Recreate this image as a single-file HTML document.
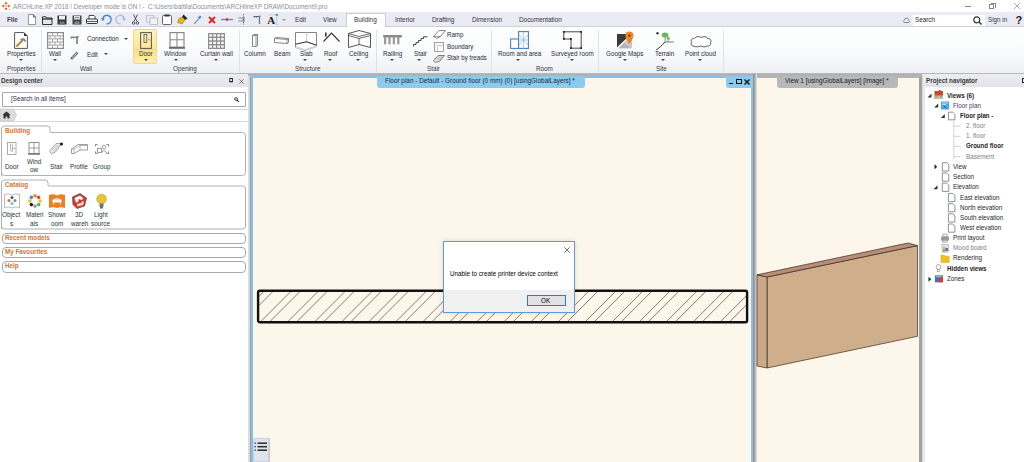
<!DOCTYPE html>
<html><head><meta charset="utf-8">
<style>
*{box-sizing:border-box;margin:0;padding:0}
html,body{width:1024px;height:462px;overflow:hidden;background:#fff;font-family:"Liberation Sans",sans-serif;color:#1e1e1e}
.a{position:absolute;white-space:nowrap}
svg{position:absolute;overflow:visible}
.x{position:absolute;white-space:nowrap;font-size:7.2px;line-height:8px;transform:scaleX(.875);transform-origin:0 0;color:#2a2a36}
#title{left:0;top:0;width:1024px;height:12px;background:#fff}
#qat{left:0;top:12px;width:1024px;height:15px;background:#ebecf3;border-bottom:1px solid #cfd1da}
#ribbon{left:0;top:27px;width:1024px;height:47px;background:linear-gradient(#fefefe,#f9fafb 55%,#eef0f3);border-bottom:1px solid #b4b8c2}
.sep{position:absolute;top:3px;width:1px;height:42px;background:#dfe2e8}
.gl{top:38px;color:#383848}
.dd{position:absolute;width:0;height:0;border-left:2px solid transparent;border-right:2px solid transparent;border-top:2px solid #444}
</style></head><body>

<!-- TITLE BAR -->
<div id="title" class="a">
  <svg style="left:1.5px;top:2px" width="8" height="8" viewBox="0 0 9 9">
    <g fill="#e8642c"><rect x="3.3" y="0.3" width="2.4" height="2.4" transform="rotate(45 4.5 1.5)"/><rect x="0.3" y="3.3" width="2.4" height="2.4" transform="rotate(45 1.5 4.5)"/><rect x="6.3" y="3.3" width="2.4" height="2.4" transform="rotate(45 7.5 4.5)"/><rect x="3.3" y="6.3" width="2.4" height="2.4" transform="rotate(45 4.5 7.5)"/><rect x="3.6" y="3.6" width="1.8" height="1.8" fill="#f4a070"/></g>
    <circle cx="8.3" cy="8.5" r="0.6" fill="#777"/>
  </svg>
  <div class="x" style="left:12.7px;top:2.7px;color:#8c8c94;transform:scaleX(.874)">ARCHLine.XP 2018 ! Developer mode is ON ! -&nbsp; C:\Users\battila\Documents\ARCHlineXP DRAW\Document9.pro</div>
  <div class="a" style="left:965px;top:5.5px;width:6px;height:0.8px;background:#888"></div>
  <div class="a" style="left:989px;top:4px;width:5px;height:5px;border:0.8px solid #888"></div>
  <div class="a" style="left:990.5px;top:2.5px;width:5px;height:5px;border-top:0.8px solid #888;border-right:0.8px solid #888"></div>
  <svg style="left:1014px;top:3px" width="6" height="6" viewBox="0 0 6 6"><path d="M0 0L6 6M6 0L0 6" stroke="#888" stroke-width="0.7"/></svg>
</div>

<!-- QUICK ACCESS / TABS -->
<div id="qat" class="a">
  <div class="x" style="left:7px;top:4.2px;font-weight:bold;color:#3a3a50">File</div>
  <!-- new -->
  <svg style="left:28px;top:2px" width="8" height="11" viewBox="0 0 9 11" preserveAspectRatio="none"><path d="M0.5 0.5H6L8.5 3V10.5H0.5Z" fill="#fff" stroke="#777" stroke-width="0.8"/><path d="M6 0.5V3H8.5" fill="none" stroke="#333" stroke-width="0.8"/></svg>
  <!-- open -->
  <svg style="left:42px;top:4px" width="11" height="9" viewBox="0 0 11 9"><path d="M0.5 8.5V0.8H4L5 2H10V8.5Z" fill="#e8e8ec" stroke="#333" stroke-width="1"/><path d="M0.5 3H10.5" stroke="#222" stroke-width="1.2"/></svg>
  <!-- save -->
  <svg style="left:57px;top:3px" width="10" height="10" viewBox="0 0 10 10"><rect x="0.5" y="0.5" width="9" height="9" fill="#333"/><rect x="2" y="1" width="6" height="3.5" fill="#eee"/><rect x="2.5" y="6.5" width="5" height="3" fill="#777"/></svg>
  <!-- save as -->
  <svg style="left:72px;top:3px" width="10" height="10" viewBox="0 0 10 10"><rect x="0.5" y="0.5" width="9" height="9" fill="#444"/><rect x="2" y="1" width="6" height="3.5" fill="#ddd"/><path d="M3 2.5H7" stroke="#555" stroke-width="0.6"/><rect x="2.5" y="6.5" width="5" height="3" fill="#888"/></svg>
  <!-- print -->
  <svg style="left:86px;top:3px" width="12" height="10" viewBox="0 0 12 10"><path d="M3 4V0.5H8L9 1.5V4" fill="#fff" stroke="#333" stroke-width="0.9"/><rect x="0.5" y="4" width="11" height="4.5" rx="0.8" fill="#f4f4f4" stroke="#333" stroke-width="1"/><path d="M0.5 6.5H11.5" stroke="#333" stroke-width="0.8"/></svg>
  <!-- undo -->
  <svg style="left:101px;top:2px" width="11" height="11" viewBox="0 0 11 11"><path d="M1.8 4.5A4.2 4.2 0 1 1 5.5 9.8" fill="none" stroke="#2f86d6" stroke-width="1.3"/><path d="M0 4.2L3.8 4.2L1.9 7.2Z" fill="#2f86d6"/></svg>
  <!-- redo -->
  <svg style="left:115px;top:2px" width="11" height="11" viewBox="0 0 11 11"><path d="M9.2 4.5A4.2 4.2 0 1 0 5.5 9.8" fill="none" stroke="#a4b8dc" stroke-width="1.2"/><path d="M11 4.2L7.2 4.2L9.1 7.2Z" fill="#a4b8dc"/></svg>
  <!-- cut -->
  <svg style="left:132px;top:2px" width="7" height="11" viewBox="0 0 7 11"><path d="M1.5 0.5L5 7.5M5.5 0.5L2 7.5" stroke="#333" stroke-width="0.8"/><circle cx="1.6" cy="9" r="1.3" fill="none" stroke="#333" stroke-width="0.8"/><circle cx="5.4" cy="9" r="1.3" fill="none" stroke="#333" stroke-width="0.8"/></svg>
  <!-- copy -->
  <svg style="left:146px;top:3px" width="12" height="10" viewBox="0 0 12 10"><rect x="0.5" y="0.5" width="7" height="6.5" fill="none" stroke="#c4c4c8" stroke-width="0.9"/><rect x="4" y="3" width="7.5" height="6.5" fill="#f4f4f6" stroke="#bbb" stroke-width="0.9"/></svg>
  <!-- paste -->
  <svg style="left:162px;top:2px" width="10" height="11" viewBox="0 0 10 11"><rect x="0.5" y="1.5" width="9" height="9" rx="1" fill="#fff" stroke="#555" stroke-width="0.9"/><rect x="2.5" y="0.5" width="5" height="2" fill="#333"/></svg>
  <!-- brush -->
  <svg style="left:177px;top:2px" width="11" height="11" viewBox="0 0 11 11"><path d="M6.5 0.5L10.5 4.5L8 6L5 3Z" fill="#222"/><path d="M5 3L8 6L5 10L0.5 8.5L1.5 5Z" fill="#e5b812" stroke="#8a6c00" stroke-width="0.5"/></svg>
  <!-- pipette -->
  <svg style="left:193px;top:3px" width="9" height="10" viewBox="0 0 9 10"><path d="M1 9L6 3.5" stroke="#999" stroke-width="1.2"/><path d="M5 2.5L7 0.5L8.5 2L6.5 4Z" fill="#2f8ad8"/></svg>
  <!-- red x -->
  <svg style="left:208px;top:4px" width="8" height="8" viewBox="0 0 8 8"><path d="M1 1L7 7M7 1L1 7" stroke="#e02020" stroke-width="1.8"/></svg>
  <!-- line -->
  <svg style="left:221px;top:5px" width="12" height="5" viewBox="0 0 12 5"><path d="M0 2.5H12" stroke="#5a88c0" stroke-width="1.3"/><rect x="4.8" y="1.3" width="2.4" height="2.4" fill="#e03030"/></svg>
  <svg style="left:238px;top:2px" width="8" height="11" viewBox="0 0 8 11"><path d="M5.5 0V11" stroke="#666" stroke-width="0.9" stroke-dasharray="1 0.6"/><path d="M0.5 4H7M0.5 7H7" stroke="#555" stroke-width="0.7"/><circle cx="5.5" cy="5.5" r="1" fill="#2f8ad8"/></svg>
  <svg style="left:253px;top:3px" width="8" height="9" viewBox="0 0 8 9"><path d="M0.5 1.5H6.5" stroke="#666" stroke-width="1"/><path d="M6.5 1V9" stroke="#777" stroke-width="1.3"/><path d="M1.5 1.5V3M3.5 1.5V3" stroke="#555" stroke-width="0.6"/><rect x="6" y="0.5" width="1.5" height="1.5" fill="#2f8ad8"/></svg>
  <div class="a" style="left:267.3px;top:2.2px;font-family:'Liberation Serif',serif;font-weight:bold;font-size:11px;line-height:13px;color:#1a1a1a">A</div>
  <svg style="left:268px;top:2px" width="10" height="11" viewBox="0 0 10 11"><path d="M0.5 0.8H8.5" stroke="#8ab8e8" stroke-width="0.7" stroke-dasharray="1 0.5"/><path d="M8.8 1V11" stroke="#4a9ae0" stroke-width="0.7" stroke-dasharray="1 0.8"/><rect x="7.8" y="0" width="2" height="1.8" fill="#2f8ad8"/></svg>
  <div class="dd" style="left:281.5px;top:7px;border-top-color:#999"></div>
  <!-- tabs -->
  <div class="x" style="left:295px;top:4.2px;color:#30303e;transform:scaleX(.887)">Edit</div>
  <div class="x" style="left:323px;top:4.2px;color:#30303e;transform:scaleX(.887)">View</div>
  <div class="a" style="left:346px;top:0.5px;width:40px;height:15px;background:#fff;border:1px solid #c9ccd6;border-bottom:none;border-radius:1px 1px 0 0"></div>
  <div class="x" style="left:354px;top:4.2px;color:#3a3040;transform:scaleX(.887)">Building</div>
  <div class="x" style="left:395px;top:4.2px;color:#30303e;transform:scaleX(.887)">Interior</div>
  <div class="x" style="left:432px;top:4.2px;color:#30303e;transform:scaleX(.887)">Drafting</div>
  <div class="x" style="left:472px;top:4.2px;color:#30303e;transform:scaleX(.887)">Dimension</div>
  <div class="x" style="left:519px;top:4.2px;color:#30303e;transform:scaleX(.887)">Documentation</div>
  <!-- right -->
  <svg style="left:903px;top:6px" width="7" height="5" viewBox="0 0 7 5"><path d="M1 4.5A1.5 1.5 0 0 1 1.5 2A2 2 0 0 1 5.5 2A1.5 1.5 0 0 1 6 4.5Z" fill="none" stroke="#666" stroke-width="0.7"/></svg>
  <div class="a" style="left:912.5px;top:2.5px;width:72px;height:11px;background:#fff"></div>
  <div class="x" style="left:915px;top:4.2px;color:#1e1e1e">Search</div>
  <svg style="left:973px;top:4.2px" width="9" height="9" viewBox="0 0 9 9"><circle cx="3.8" cy="3.8" r="3" fill="none" stroke="#333" stroke-width="1.2"/><path d="M6 6L8.5 8.5" stroke="#333" stroke-width="1.4"/></svg>
  <div class="x" style="left:988px;top:4.2px;color:#2e3a4e">Sign in</div>
  <div class="a" style="left:1015.5px;top:2px;font-size:11px;font-weight:bold;line-height:12px;color:#222">?</div>
</div>

<!-- RIBBON -->
<div id="ribbon" class="a">
  <div class="sep" style="left:41px"></div>
  <div class="sep" style="left:239px"></div>
  <div class="sep" style="left:376px"></div>
  <div class="sep" style="left:491px"></div>
  <div class="sep" style="left:598px"></div>
  <div class="sep" style="left:723px"></div>
  <div class="x gl" style="left:7px">Properties</div>
  <div class="x gl" style="left:80px">Wall</div>
  <div class="x gl" style="left:173px">Opening</div>
  <div class="x gl" style="left:295px">Structure</div>
  <div class="x gl" style="left:427px">Stair</div>
  <div class="x gl" style="left:536px">Room</div>
  <div class="x gl" style="left:656px">Site</div>
    <!-- Properties -->
  <svg style="left:14px;top:5px" width="14" height="17" viewBox="0 0 14 17"><path d="M0.6 0.6H10L13.4 4V16.4H0.6Z" fill="#fff" stroke="#555" stroke-width="1"/><path d="M10 0.6L13.4 4H10Z" fill="#333"/><path d="M2.5 14.3L8.5 8.3" stroke="#e08a2a" stroke-width="1.9"/><path d="M2.5 14.3L8.5 8.3" stroke="#b86010" stroke-width="1.9" stroke-dasharray="0.5 0.9"/><path d="M6 7.6Q7.8 5.4 10.2 6.2L12.4 9.2L11 9.9L9.3 8.4L7.6 9.2Z" fill="#8c8c8c"/></svg>
  <div class="x" style="left:7px;top:23px">Properties</div>
  <div class="dd" style="left:18.5px;top:31.7px"></div>
  <!-- Wall -->
  <svg style="left:47px;top:5px" width="17" height="17" viewBox="0 0 17 17"><rect x="0.6" y="0.6" width="15.8" height="15.8" fill="#fff" stroke="#8a8a8a" stroke-width="1.2"/><g stroke="#9a9a9a" stroke-width="0.9"><path d="M0.6 3.8H16.4M0.6 6.9H16.4M0.6 10H16.4M0.6 13.1H16.4"/><path d="M5.5 0.6V3.8M10.5 0.6V3.8M3 3.8V6.9M8 3.8V6.9M13 3.8V6.9M5.5 6.9V10M10.5 6.9V10M3 10V13.1M8 10V13.1M13 10V13.1M5.5 13.1V16.4M10.5 13.1V16.4"/></g></svg>
  <div class="x" style="left:49px;top:23px">Wall</div>
  <div class="dd" style="left:53.1px;top:31.7px"></div>
  <!-- Connection / Edit -->
  <svg style="left:70px;top:9px" width="9" height="8" viewBox="0 0 9 8"><path d="M0.5 1.2H7" stroke="#666" stroke-width="1.1"/><path d="M7 1V8" stroke="#777" stroke-width="1.6"/><path d="M1.5 1.2V2.8M3.5 1.2V2.8" stroke="#666" stroke-width="0.7"/><rect x="6.5" y="0" width="2" height="1.8" fill="#3a8ae0"/></svg>
  <div class="x" style="left:87px;top:8px">Connection</div>
  <div class="dd" style="left:124px;top:11px"></div>
  <svg style="left:70px;top:24px" width="9" height="9" viewBox="0 0 9 9"><path d="M1.2 7.8L7.5 1.5" stroke="#777" stroke-width="2.6"/><path d="M1.2 7.8L7.5 1.5" stroke="#bbb" stroke-width="1"/><path d="M0.5 8.5L1.5 6.8L2.2 7.5Z" fill="#333"/></svg>
  <div class="x" style="left:87px;top:23.8px">Edit</div>
  <div class="dd" style="left:103.5px;top:26.3px"></div>
  <!-- Door (highlighted) -->
  <div class="a" style="left:133px;top:2px;width:24px;height:35px;border:1px solid #ecd98c;border-radius:2px;background:linear-gradient(#fdf2bd,#fbe89a 55%,#fbe08a 62%,#fdeeb0)"></div>
  <div class="a" style="left:134px;top:22px;width:22px;height:1px;background:#efd98a"></div>
  <svg style="left:139.5px;top:5px" width="12" height="17" viewBox="0 0 12 17"><rect x="0.6" y="0.6" width="10.8" height="15.8" fill="none" stroke="#555" stroke-width="1"/><rect x="4" y="2.5" width="2.8" height="8" fill="none" stroke="#555" stroke-width="0.8"/><path d="M8 7.8L9.5 7.2V8.4Z" fill="#444"/></svg>
  <div class="x" style="left:139px;top:23px">Door</div>
  <div class="dd" style="left:143.6px;top:31.7px"></div>
  <!-- Window -->
  <svg style="left:168.5px;top:5px" width="16" height="17" viewBox="0 0 16 17"><rect x="1" y="0.6" width="14" height="14.5" fill="#fff" stroke="#8a8a8a" stroke-width="1.2"/><path d="M8 0.6V15M1 7.8H15" stroke="#8a8a8a" stroke-width="1.1"/><rect x="0" y="15" width="16" height="1.8" fill="#6a6a6a"/></svg>
  <div class="x" style="left:164px;top:23px">Window</div>
  <div class="dd" style="left:173.6px;top:31.7px"></div>
  <!-- Curtain wall -->
  <svg style="left:208px;top:5.5px" width="17" height="16" viewBox="0 0 17 16"><rect x="0" y="0" width="17" height="16" fill="#8e8e8e"/><g fill="#fff"><rect x="1.3" y="1.3" width="2.6" height="2.3"/><rect x="5.3" y="1.3" width="2.6" height="2.3"/><rect x="9.3" y="1.3" width="2.6" height="2.3"/><rect x="13.2" y="1.3" width="2.5" height="2.3"/><rect x="1.3" y="5" width="2.6" height="2.3"/><rect x="5.3" y="5" width="2.6" height="2.3"/><rect x="9.3" y="5" width="2.6" height="2.3"/><rect x="13.2" y="5" width="2.5" height="2.3"/><rect x="1.3" y="8.7" width="2.6" height="2.3"/><rect x="5.3" y="8.7" width="2.6" height="2.3"/><rect x="9.3" y="8.7" width="2.6" height="2.3"/><rect x="13.2" y="8.7" width="2.5" height="2.3"/><rect x="1.3" y="12.4" width="2.6" height="2.3"/><rect x="5.3" y="12.4" width="2.6" height="2.3"/><rect x="9.3" y="12.4" width="2.6" height="2.3"/><rect x="13.2" y="12.4" width="2.5" height="2.3"/></g></svg>
  <div class="x" style="left:200px;top:23px">Curtain wall</div>
  <div class="dd" style="left:213.9px;top:31.7px"></div>
  <!-- Column -->
  <svg style="left:251.5px;top:7px" width="6" height="13" viewBox="0 0 6 13"><path d="M0.5 1.5L2 0.5H5.5V11.5L4 12.5H0.5Z" fill="#fff" stroke="#666" stroke-width="0.8"/><path d="M0.5 1.5H4V12.5M4 1.5L5.5 0.5" fill="none" stroke="#666" stroke-width="0.7"/></svg>
  <div class="x" style="left:244px;top:23px">Column</div>
  <!-- Beam -->
  <svg style="left:274px;top:9.5px" width="15" height="7" viewBox="0 0 15 7"><path d="M0.5 1.5L2 0.5L14.5 1.5V5.5L13 6.5L0.5 5.5Z" fill="#fff" stroke="#666" stroke-width="0.8"/><path d="M0.5 1.5L13 2.5V6.5M13 2.5L14.5 1.5" fill="none" stroke="#666" stroke-width="0.7"/></svg>
  <div class="x" style="left:274px;top:23px">Beam</div>
  <!-- Slab -->
  <svg style="left:295px;top:5px" width="22" height="19" viewBox="0 0 22 19"><path d="M0.5 15.5V0.5H21.5V14" fill="#fff" stroke="#666" stroke-width="0.8"/><path d="M11.7 0.5V10" stroke="#c4c4c4" stroke-width="1"/><path d="M0.5 12.2L11.7 9.7L21.5 13.2" fill="none" stroke="#333" stroke-width="1.1"/><path d="M0.5 14.5L10 17.8L21.5 13.8M0.5 16L10 18.6L21.5 15" fill="none" stroke="#aaa" stroke-width="0.6"/></svg>
  <div class="x" style="left:300px;top:23px">Slab</div>
  <div class="dd" style="left:303.3px;top:31.7px"></div>
  <!-- Roof -->
  <svg style="left:323px;top:5px" width="17" height="10" viewBox="0 0 17 10"><path d="M0.5 9.5L8.5 1L16.5 9.5" fill="none" stroke="#333" stroke-width="1.1"/><rect x="2" y="0.5" width="1.6" height="4" fill="#333"/></svg>
  <div class="x" style="left:324px;top:23px">Roof</div>
  <div class="dd" style="left:328.3px;top:31.7px"></div>
  <!-- Ceiling -->
  <svg style="left:348px;top:3px" width="23" height="18" viewBox="0 0 23 18"><path d="M0.5 3.5L11 0.5L22.5 3.5V17.5L11 14.5L0.5 17.5Z" fill="#fff" stroke="#444" stroke-width="0.9"/><path d="M0.5 3.5L11 6.5L22.5 3.5M0.5 5.5L11 8.5L22.5 5.5M11 8.5V14.5" fill="none" stroke="#444" stroke-width="0.8"/></svg>
  <div class="x" style="left:349px;top:23px">Ceiling</div>
  <div class="dd" style="left:356.3px;top:31.7px"></div>
  <!-- Railing -->
  <svg style="left:383px;top:8px" width="19" height="10" viewBox="0 0 19 10"><rect x="0" y="0" width="19" height="2.4" rx="1" fill="#888"/><g fill="#999"><rect x="1" y="1.5" width="2.2" height="8" rx="1"/><rect x="5.4" y="1.5" width="2.2" height="8" rx="1"/><rect x="9.8" y="1.5" width="2.2" height="8" rx="1"/><rect x="14.2" y="1.5" width="2.2" height="8" rx="1"/></g></svg>
  <div class="x" style="left:383px;top:23px">Railing</div>
  <div class="dd" style="left:389.6px;top:31.7px"></div>
  <!-- Stair -->
  <svg style="left:413px;top:9px" width="15" height="11" viewBox="0 0 15 11"><path d="M0.5 10.5V8.5H3V6.5H5.5V4.5H8V2.5H10.5V0.8H14.5" fill="none" stroke="#333" stroke-width="0.9"/></svg>
  <div class="x" style="left:414px;top:23px">Stair</div>
  <div class="dd" style="left:417.4px;top:31.7px"></div>
  <!-- Ramp / Boundary / Stair by treads -->
  <svg style="left:433px;top:3px" width="13" height="9" viewBox="0 0 13 9"><path d="M0.5 6.5L6 0.5H12.5L7.5 6.5L3.5 8.5Z" fill="#fff" stroke="#666" stroke-width="0.8"/><path d="M0.5 6.5L7.5 6.5" stroke="#666" stroke-width="0.6"/></svg>
  <div class="x" style="left:447px;top:3.5px;transform:scaleX(.855)">Ramp</div>
  <svg style="left:434px;top:14.5px" width="10" height="10" viewBox="0 0 10 10"><rect x="0.5" y="0.5" width="9" height="9" fill="#fff" stroke="#8a8a8a" stroke-width="0.8"/><path d="M3.5 9.5V3.5H9.5" fill="none" stroke="#aaa" stroke-width="0.6"/><path d="M1.8 2H8.5M2 3V8.5" stroke="#ccc" stroke-width="0.5" stroke-dasharray="0.8 0.6"/></svg>
  <div class="x" style="left:447px;top:15.7px;transform:scaleX(.855)">Boundary</div>
  <svg style="left:433px;top:28px" width="12" height="8" viewBox="0 0 12 8"><path d="M0.5 6L5 0.5H11.5L7 6L2.5 7.5Z" fill="#e4e4e4" stroke="#666" stroke-width="0.8"/><path d="M3 4H9M4.5 2.2H10.3" stroke="#888" stroke-width="0.5"/></svg>
  <div class="x" style="left:447px;top:27.3px;transform:scaleX(.855)">Stair by treads</div>
  <!-- Room and area -->
  <svg style="left:510px;top:4px" width="19" height="18" viewBox="0 0 19 18"><rect x="0.6" y="8" width="8" height="9.4" fill="#fff" stroke="#4a80c0" stroke-width="1.1"/><rect x="8.6" y="0.6" width="9.8" height="16.8" fill="#fff" stroke="#4a80c0" stroke-width="1.1"/><path d="M13.5 0.6V17.4M8.6 9H18.4M9 4L18 14M18 4L9 14" stroke="#7eaee0" stroke-width="0.6"/></svg>
  <div class="x" style="left:498px;top:23px">Room and area</div>
  <div class="dd" style="left:516.4px;top:31.7px"></div>
  <!-- Surveyed room -->
  <svg style="left:563px;top:4px" width="19" height="18" viewBox="0 0 19 18"><path d="M0.8 0.8H18.2V17.2H8V8H0.8Z" fill="none" stroke="#333" stroke-width="0.9"/><g fill="#222"><rect x="0" y="0" width="1.8" height="1.8"/><rect x="17.2" y="0" width="1.8" height="1.8"/><rect x="17.2" y="16.2" width="1.8" height="1.8"/><rect x="7" y="16.2" width="1.8" height="1.8"/><rect x="7" y="7" width="1.8" height="1.8"/><rect x="0" y="7" width="1.8" height="1.8"/></g></svg>
  <div class="x" style="left:551px;top:23px">Surveyed room</div>
  <div class="dd" style="left:569.5px;top:31.7px"></div>
  <!-- Google Maps -->
  <svg style="left:617px;top:4px" width="17" height="18" viewBox="0 0 17 18"><path d="M0 3H9.5V7.5L0 16.5Z" fill="#3a3a3a"/><path d="M9.5 8.3L15 8.3V17.3H1.5Z" fill="#c8c8cc"/><path d="M1.6 17.3L7.3 12L13.6 17.3Z" fill="#b4b4b8"/><path d="M0.8 16.6L9.5 8.3" stroke="#fff" stroke-width="1"/><path d="M12.4 0.6A4 4 0 0 1 16.4 4.6C16.4 7.6 12.4 13.3 12.4 13.3C12.4 13.3 8.4 7.6 8.4 4.6A4 4 0 0 1 12.4 0.6Z" fill="#ee8422"/><circle cx="12.4" cy="4.6" r="1.1" fill="#333"/></svg>
  <div class="x" style="left:606px;top:23px">Google Maps</div>
  <div class="dd" style="left:622.7px;top:31.7px"></div>
  <!-- Terrain -->
  <svg style="left:655px;top:4px" width="20" height="20" viewBox="0 0 20 20"><circle cx="2.5" cy="2.3" r="1.2" fill="#333"/><path d="M10.1 6V11M13 8V11" stroke="#8a8a8a" stroke-width="0.9"/><ellipse cx="10.1" cy="4" rx="3.4" ry="2.6" fill="#6ab45a"/><circle cx="13.4" cy="7.3" r="1.6" fill="#7ac06a"/><path d="M1.2 18.8C4 17.5 7 14 10.1 11" fill="none" stroke="#333" stroke-width="1"/><path d="M10.1 11H18.8" stroke="#777" stroke-width="1"/></svg>
  <div class="x" style="left:655px;top:23px">Terrain</div>
  <div class="dd" style="left:661.3px;top:31.7px"></div>
  <!-- Point cloud -->
  <svg style="left:690px;top:9px" width="22" height="11" viewBox="0 0 22 11"><path d="M4 10.2C1 10.2 0.5 7.5 1.8 6.3C0.3 4.5 2 1.8 4.5 2.5C6 0 10 0.2 11 1.8C13 0 17 0.5 17.5 2.5C20.5 2.2 22 5 20.3 6.5C21.5 8.5 19.5 10.5 17 10C15.5 11.3 12 11 11 9.8C9.5 11 5.5 11 4 10.2Z" fill="#fff" stroke="#333" stroke-width="0.8"/></svg>
  <div class="x" style="left:685px;top:23px">Point cloud</div>
  <div class="dd" style="left:698.3px;top:31.7px"></div>

</div>

<!-- LEFT PANEL: DESIGN CENTER -->
<div class="a" style="left:0;top:74px;width:248px;height:388px;background:#fff"></div>
<div class="a" style="left:0;top:74px;width:248px;height:13px;background:linear-gradient(#eeeef0,#e2e3e6)"></div>
<div class="x" style="left:1px;top:76.5px;font-weight:bold;color:#383840;transform:scaleX(.876)">Design center</div>
<svg style="left:229px;top:78px" width="5" height="5" viewBox="0 0 5 5"><rect x="0.8" y="0.5" width="2.6" height="3" fill="#fff" stroke="#222" stroke-width="1"/><path d="M0.3 3.8H4" stroke="#222" stroke-width="0.9"/></svg>
<svg style="left:239px;top:78.5px" width="5" height="5" viewBox="0 0 5 5"><path d="M0.3 0.3L4.7 4.7M4.7 0.3L0.3 4.7" stroke="#555" stroke-width="0.7"/></svg>
<div class="a" style="left:2px;top:92px;width:243.5px;height:14.5px;border:1px solid #a8a8a8;border-radius:1px;background:#fff"></div>
<div class="x" style="left:11px;top:95px;color:#2e2a44;transform:scaleX(.872)">[Search in all items]</div>
<svg style="left:234px;top:96.5px" width="5" height="5" viewBox="0 0 5 5"><circle cx="2" cy="2" r="1.4" fill="none" stroke="#333" stroke-width="0.9"/><path d="M3 3L4.8 4.8" stroke="#333" stroke-width="1.1"/></svg>
<div class="a" style="left:0;top:108.5px;width:248px;height:1px;background:#d8d8d8"></div>
<div class="a" style="left:0;top:121px;width:248px;height:1px;background:#d8d8d8"></div>
<svg style="left:0;top:109px" width="18" height="12" viewBox="0 0 18 12"><path d="M0 0H13.5L16.5 6L13.5 12H0Z" fill="#dcdcdc" stroke="#c4c4c4" stroke-width="0.6"/><path d="M2.5 5.8L6.5 2.5L10.5 5.8H9.5V9.5H7.4V7.5H5.6V9.5H3.5V5.8Z" fill="#333"/></svg>

<!-- Building group -->
<svg style="left:0;top:125px" width="248" height="52" viewBox="0 0 248 52"><path d="M1.5 51V4Q1.5 1 4.5 1H47Q50 1 50 4V6.8Q50 7.5 51 7.5H242.5Q245.5 7.5 245.5 10.5V47.5Q245.5 50.5 242.5 50.5H4.5Q1.5 50.5 1.5 47.5" fill="#fff" stroke="#b0b0b0" stroke-width="1"/></svg>
<div class="x" style="left:5px;top:127px;font-weight:bold;color:#d2742e">Building</div>
<!-- door -->
<svg style="left:7px;top:141.5px" width="10" height="13" viewBox="0 0 10 13"><rect x="0.5" y="0.5" width="8.5" height="12" fill="#fff" stroke="#999" stroke-width="0.8"/><path d="M3.5 1.5V8.5L5.5 9.5V1.5" fill="none" stroke="#999" stroke-width="0.7"/><path d="M6.5 6.5L8 6.5" stroke="#777" stroke-width="0.7"/></svg>
<svg style="left:28px;top:141.5px" width="12" height="13" viewBox="0 0 12 13"><rect x="1" y="0.5" width="10" height="11" fill="#fff" stroke="#888" stroke-width="0.9"/><path d="M6 0.5V11.5M1 6H11" stroke="#888" stroke-width="0.8"/><rect x="0" y="11.5" width="12" height="1.2" fill="#666"/></svg>
<svg style="left:49px;top:142px" width="15" height="12" viewBox="0 0 15 12"><path d="M0.5 9L7 1.5H12.5L6 10.5L2 11.5Z" fill="#f0f0f0" stroke="#888" stroke-width="0.7"/><path d="M2.5 8.5L8 2.5M4 9L9.5 3M5 9.8L11 3" stroke="#aaa" stroke-width="0.5"/><circle cx="12.5" cy="2" r="1.6" fill="#222"/></svg>
<svg style="left:71px;top:144px" width="17" height="10" viewBox="0 0 17 10"><path d="M0.5 5L7 0.5H16.5V6H9L3 9.5H0.5Z" fill="#fff" stroke="#888" stroke-width="0.8"/><path d="M0.5 5H3V9.5M3 5L9 1.5M9 1.5V6M9 1.5H16.5" fill="none" stroke="#888" stroke-width="0.6"/></svg>
<svg style="left:95px;top:144px" width="14" height="10" viewBox="0 0 14 10"><path d="M0.5 2.5V0.5H2.5M11.5 0.5H13.5V2.5M13.5 7.5V9.5H11.5M2.5 9.5H0.5V7.5" fill="none" stroke="#555" stroke-width="0.7"/><rect x="2.5" y="4.5" width="4" height="4" fill="none" stroke="#777" stroke-width="0.7"/><circle cx="9" cy="3.2" r="1.8" fill="none" stroke="#777" stroke-width="0.7"/><path d="M6.5 9C7 6 11 6 11.5 9" fill="none" stroke="#777" stroke-width="0.7"/></svg>
<div class="x" style="left:5px;top:162.5px;color:#24382c">Door</div>
<div class="x" style="left:27px;top:158px;color:#24382c">Wind</div>
<div class="x" style="left:30px;top:166px;color:#24382c">ow</div>
<div class="x" style="left:50px;top:162.5px;color:#24382c">Stair</div>
<div class="x" style="left:70px;top:162.5px;color:#24382c">Profile</div>
<div class="x" style="left:93px;top:162.5px;color:#24382c">Group</div>

<!-- Catalog group -->
<svg style="left:0;top:178.5px" width="248" height="52" viewBox="0 0 248 52"><path d="M1.5 50V4Q1.5 1 4.5 1H45Q48 1 48 4V6Q48 7 49 7H242.5Q245.5 7 245.5 10V47Q245.5 50 242.5 50H4.5Q1.5 50 1.5 47" fill="#fff" stroke="#b0b0b0" stroke-width="1"/></svg>
<div class="x" style="left:5px;top:180.5px;font-weight:bold;color:#d2742e">Catalog</div>
<svg style="left:4px;top:193px" width="16" height="16" viewBox="0 0 16 16"><path d="M0.5 1.5Q4 0 8 2Q12 0 15.5 1.5V14.5Q12 13 8 15Q4 13 0.5 14.5Z" fill="#fff" stroke="#999" stroke-width="0.7"/><circle cx="8" cy="4.5" r="1.5" fill="#3a5a6a"/><circle cx="5" cy="7.5" r="1.5" fill="#e8643a"/><circle cx="11" cy="7.5" r="1.5" fill="#888"/><circle cx="8" cy="10.5" r="1.5" fill="#5ac8e8"/></svg>
<svg style="left:27.5px;top:194px" width="14" height="14" viewBox="0 0 14 14"><g><circle cx="7" cy="1.9" r="1.8" fill="#f08a2a"/><circle cx="10.6" cy="3.4" r="1.8" fill="#e84a3a"/><circle cx="12.1" cy="7" r="1.8" fill="#e8c03a"/><circle cx="10.6" cy="10.6" r="1.8" fill="#4ab84a"/><circle cx="7" cy="12.1" r="1.8" fill="#999"/><circle cx="3.4" cy="10.6" r="1.8" fill="#222"/><circle cx="1.9" cy="7" r="1.8" fill="#f0c020"/><circle cx="3.4" cy="3.4" r="1.8" fill="#3a8ae0"/></g><circle cx="7" cy="7" r="3.3" fill="#fff"/></svg>
<svg style="left:49px;top:194px" width="16" height="14" viewBox="0 0 16 14"><path d="M0 1Q4 -0.5 8 1.5Q12 -0.5 16 1V14Q12 12.5 8 14Q4 12.5 0 14Z" fill="#ec8020"/><path d="M3.5 5.5H12.5V8.5H3.5Z" fill="#fff"/><path d="M4.5 8.5V10.5M11.5 8.5V10.5M5 5.5Q8 3.5 11 5.5" fill="none" stroke="#fff" stroke-width="0.9"/></svg>
<svg style="left:72px;top:193px" width="15" height="16" viewBox="0 0 15 16"><path d="M0.5 4L8 0.5L14.5 5L12.5 13L5 15.5L1 11.5Z" fill="#d83a2a" stroke="#333" stroke-width="0.6"/><path d="M2.5 5L8 2.5L11.5 5.5L9.5 7L7 6L6 9L4 9.5Z" fill="#fff"/><path d="M5 11L9 10L10.5 8L12 9L11 12L5.5 13.5Z" fill="#f0d8d0"/></svg>
<svg style="left:96px;top:194px" width="11" height="15" viewBox="0 0 11 15"><circle cx="5.5" cy="5" r="4.8" fill="#ecc43a" stroke="#b08a10" stroke-width="0.5"/><rect x="3.5" y="9.5" width="4" height="3.5" fill="#777"/><rect x="4.2" y="13" width="2.6" height="1.5" fill="#555"/></svg>
<div class="x" style="left:2px;top:211px;color:#24382c">Object</div>
<div class="x" style="left:10px;top:219.5px;color:#24382c">s</div>
<div class="x" style="left:26px;top:211px;color:#24382c">Materi</div>
<div class="x" style="left:30px;top:219.5px;color:#24382c">als</div>
<div class="x" style="left:48px;top:211px;color:#24382c">Showr</div>
<div class="x" style="left:51px;top:219.5px;color:#24382c">oom</div>
<div class="x" style="left:75px;top:211px;color:#24382c">3D</div>
<div class="x" style="left:71px;top:219.5px;color:#24382c">wareh</div>
<div class="x" style="left:94px;top:211px;color:#24382c">Light</div>
<div class="x" style="left:91px;top:219.5px;color:#24382c">source</div>

<div class="a" style="left:1.5px;top:232.5px;width:244px;height:11.5px;border:1px solid #a8a8a8;border-radius:4px;background:#fff"></div>
<div class="x" style="left:5px;top:233.5px;font-weight:bold;color:#d2742e">Recent models</div>
<div class="a" style="left:1.5px;top:246.5px;width:244px;height:11.5px;border:1px solid #a8a8a8;border-radius:4px;background:#fff"></div>
<div class="x" style="left:5px;top:247.5px;font-weight:bold;color:#d2742e">My Favourites</div>
<div class="a" style="left:1.5px;top:261px;width:244px;height:11.5px;border:1px solid #a8a8a8;border-radius:4px;background:#fff"></div>
<div class="x" style="left:5px;top:262px;font-weight:bold;color:#d2742e">Help</div>

<!-- splitter -->
<div class="a" style="left:248px;top:74px;width:3px;height:388px;background:#dcdcdc"></div>
<div class="a" style="left:249.6px;top:74px;width:1.2px;height:388px;background:#9c9c9c"></div>

<!-- FLOOR PLAN VIEW -->
<div class="a" style="left:248px;top:74px;width:674px;height:1.6px;background:#b2b2b4"></div>
<div class="a" style="left:251px;top:75.5px;width:502px;height:387px;background:#fcf7ea;border:2.5px solid #84c2ec;border-bottom:none;border-radius:2px 2px 0 0"></div>
<div class="a" style="left:376.5px;top:75.5px;width:208.5px;height:12.8px;background:#8ccaf0;border-radius:0 0 3px 3px"></div>
<div class="x" style="left:384.5px;top:77px;color:#1e2a3a;transform:scaleX(.89)">Floor plan - Default - Ground floor (0 mm) (0) [usingGlobalLayers] *</div>
<div class="a" style="left:726px;top:75.5px;width:27px;height:12.5px;background:#8ccaf0;border-radius:0 0 0 3px"></div>
<div class="a" style="left:729px;top:82.5px;width:4px;height:1.5px;background:#111"></div>
<div class="a" style="left:736px;top:79px;width:5.5px;height:4.5px;border:1px solid #111;border-top-width:1.6px"></div>
<svg style="left:744px;top:78.5px" width="6" height="6" viewBox="0 0 6 6"><path d="M0.5 0.5L5.5 5.5M5.5 0.5L0.5 5.5" stroke="#111" stroke-width="1.4"/></svg>

<!-- hatched wall -->
<svg style="left:256px;top:288.5px" width="494" height="35" viewBox="0 0 494 35">
  <defs><clipPath id="hc"><rect x="2" y="2" width="489" height="31"/></clipPath></defs>
  <path clip-path="url(#hc)" d="M-42.80 -1L-78.80 35 M-33.70 -1L-69.70 35 M-15.75 -1L-51.75 35 M-6.65 -1L-42.65 35 M11.30 -1L-24.70 35 M20.40 -1L-15.60 35 M38.35 -1L2.35 35 M47.45 -1L11.45 35 M65.40 -1L29.40 35 M74.50 -1L38.50 35 M92.45 -1L56.45 35 M101.55 -1L65.55 35 M119.50 -1L83.50 35 M128.60 -1L92.60 35 M146.55 -1L110.55 35 M155.65 -1L119.65 35 M173.60 -1L137.60 35 M182.70 -1L146.70 35 M200.65 -1L164.65 35 M209.75 -1L173.75 35 M227.70 -1L191.70 35 M236.80 -1L200.80 35 M254.75 -1L218.75 35 M263.85 -1L227.85 35 M281.80 -1L245.80 35 M290.90 -1L254.90 35 M308.85 -1L272.85 35 M317.95 -1L281.95 35 M335.90 -1L299.90 35 M345.00 -1L309.00 35 M362.95 -1L326.95 35 M372.05 -1L336.05 35 M390.00 -1L354.00 35 M399.10 -1L363.10 35 M417.05 -1L381.05 35 M426.15 -1L390.15 35 M444.10 -1L408.10 35 M453.20 -1L417.20 35 M471.15 -1L435.15 35 M480.25 -1L444.25 35 M498.20 -1L462.20 35 M507.30 -1L471.30 35 M525.25 -1L489.25 35 M534.35 -1L498.35 35" stroke="#333" stroke-width="0.62" fill="none"/>
  <rect x="2.1" y="1.8" width="489" height="31.4" rx="1.8" fill="none" stroke="#111" stroke-width="2.4"/>
</svg>
<!-- dialog -->
<div class="a" style="left:443px;top:241px;width:131.5px;height:71.5px;background:#fff;border:1px solid #5f9ad6;box-shadow:0 0 5px rgba(60,40,0,.15)"></div>
<div class="a" style="left:444px;top:289.5px;width:129.5px;height:22px;background:#f0f0f0"></div>
<svg style="left:563.5px;top:247px" width="6" height="6" viewBox="0 0 6 6"><path d="M0.3 0.3L5.7 5.7M5.7 0.3L0.3 5.7" stroke="#333" stroke-width="0.7"/></svg>
<div class="x" style="left:450px;top:270px;font-size:7px;transform:scaleX(.9);color:#000">Unable to create printer device context</div>
<div class="a" style="left:526.5px;top:295px;width:39px;height:11px;background:#e2e2e2;border:1px solid #2f7ad0"></div>
<div class="x" style="left:541px;top:297px;font-size:7px;transform:scaleX(.9);color:#000">OK</div>

<!-- list button -->
<div class="a" style="left:253px;top:438px;width:16px;height:24px;background:#dfe4ec;border:1px solid #c8d4e4;border-radius:2px 2px 0 0;box-shadow:1px 0 1px rgba(0,0,0,.2)"></div>
<svg style="left:254px;top:442px" width="14" height="10" viewBox="0 0 14 10"><g fill="#333"><rect x="0.5" y="0.5" width="1.3" height="1.3"/><rect x="0.5" y="4" width="1.3" height="1.3"/><rect x="0.5" y="7.5" width="1.3" height="1.3"/><rect x="3.5" y="0.4" width="9.5" height="1.6"/><rect x="3.5" y="3.9" width="9.5" height="1.6"/><rect x="3.5" y="7.4" width="9.5" height="1.6"/></g></svg>

<!-- gap -->
<div class="a" style="left:753px;top:74px;width:4px;height:388px;background:linear-gradient(90deg,#8a8a8a,#a8a8a8 45%,#ece8e0)"></div>

<!-- VIEW 1 -->
<div class="a" style="left:757px;top:75.5px;width:165px;height:387px;background:#fcf7ea;border:2.5px solid #b4b4b4;border-right:3px solid #a2a2a2;border-bottom:none;border-left:none"></div>
<div class="a" style="left:777px;top:75.5px;width:121px;height:12px;background:#b8b8b8;border-radius:0 0 3px 3px"></div>
<div class="x" style="left:785px;top:77px;color:#1a1a1a;transform:scaleX(.88)">View 1 [usingGlobalLayers] [Image] *</div>

<!-- 3D wall -->
<svg style="left:0;top:0" width="1024" height="462" viewBox="0 0 1024 462">
  <path d="M767 277L917.5 245.6V336.3L767 368Z" fill="#cfae8b" stroke="#3a2a22" stroke-width="0.7"/>
  <path d="M757 274.8L767 277V368L757 366Z" fill="#cba986" stroke="#3a2a22" stroke-width="0.7"/>
  <path d="M757 274.8L908 243L917.5 245.6L767 277Z" fill="#b98d78" stroke="#3a2a22" stroke-width="0.7"/>
</svg>

<!-- splitter 2 -->
<div class="a" style="left:922px;top:74px;width:1px;height:388px;background:#dcdcdc"></div>

<!-- PROJECT NAVIGATOR -->
<div class="a" style="left:923px;top:74px;width:101px;height:388px;background:#fff;border-left:2px solid #e8e8e8"></div>
<div class="a" style="left:923px;top:74px;width:101px;height:13px;background:linear-gradient(#eeeef0,#e2e3e6)"></div>
<div class="x" style="left:926px;top:76.5px;font-weight:bold;color:#383840">Project navigator</div>
<div class="a" style="left:1022px;top:78px;width:3px;height:4.5px;border:1.2px solid #222;border-right:none"></div>
<!-- tree -->
<svg style="left:0;top:0" width="1024" height="462" viewBox="0 0 1024 462">
  <g fill="#333">
    <path d="M931.5 93.5V97.5H927.5Z"/>
    <path d="M938.2 103.6V107.6H934.2Z"/>
    <path d="M944.8 114V118H940.8Z"/>
    <path d="M934.5 164.3L937.2 166.8L934.5 169.3Z" fill="#222"/>
    <path d="M937.5 185.3V189.3H933.5Z"/>
    <path d="M928.5 276.8L931.2 279.3L928.5 281.8Z" fill="#222"/>
  </g>
  <!-- views icon -->
  <rect x="934.5" y="91" width="8.5" height="8" fill="#c84a2a"/>
  <rect x="934.5" y="95.5" width="8.5" height="3.5" fill="#e8b878"/>
  <rect x="935.5" y="96" width="2" height="1.5" fill="#5ab0e8"/><rect x="940" y="96" width="2" height="1.5" fill="#5ab0e8"/>
  <rect x="939" y="90" width="1.5" height="1.5" fill="#a83a1a"/>
  <!-- floor plan icon -->
  <rect x="941" y="101.5" width="8" height="8" fill="#4aa8e8"/>
  <path d="M942 103H948M942 104.5H946" stroke="#fff" stroke-width="0.6"/>
  <path d="M943.5 105.5L946.5 108.5" stroke="#1a4a8a" stroke-width="0.9"/>
  <!-- doc icons -->
  <g fill="#fff" stroke="#5a6470" stroke-width="0.7">
    <path d="M948.4 112.2H952.8L954.9 114.3V119.8H948.4Z"/>
    <path d="M942.3 162.7H946.7L948.8 164.8V171H942.3Z"/>
    <path d="M942.3 172.9H946.7L948.8 175V181.2H942.3Z"/>
    <path d="M942.3 183.1H946.7L948.8 185.2V191.4H942.3Z"/>
    <path d="M948.4 193.4H952.8L954.9 195.5V201.6H948.4Z"/>
    <path d="M948.4 203.6H952.8L954.9 205.7V211.8H948.4Z"/>
    <path d="M948.4 213.8H952.8L954.9 215.9V222H948.4Z"/>
    <path d="M948.4 224H952.8L954.9 226.1V232.2H948.4Z"/>
  </g>
  <!-- tree lines -->
  <g stroke="#b4b4b4" stroke-width="0.6">
    <path d="M953.8 121V159M953.8 126.1H960.5M953.8 136.3H960.5M953.8 146.4H960.5M953.8 156.6H960.5"/>
  </g>
  <!-- print layout -->
  <rect x="943" y="234" width="4" height="2.5" fill="#fff" stroke="#777" stroke-width="0.6"/>
  <rect x="941" y="236.5" width="8" height="4" rx="0.5" fill="#999"/>
  <rect x="942.5" y="240.5" width="5" height="1.8" fill="#ddd" stroke="#777" stroke-width="0.4"/>
  <!-- mood board -->
  <rect x="942" y="244.3" width="6.5" height="7.8" fill="#dde4ea" stroke="#8a9aaa" stroke-width="0.5"/>
  <rect x="943" y="247" width="2.5" height="2.5" fill="#c8c830"/><rect x="945.5" y="248" width="2.3" height="3" fill="#9a3ac8"/><rect x="943" y="249.5" width="2.5" height="2" fill="#4ab84a"/>
  <!-- folder -->
  <path d="M941 255.2H944.5L945.5 256.2H949.2V262.4H941Z" fill="#f0c020" stroke="#d8a010" stroke-width="0.5"/>
  <!-- bulb -->
  <circle cx="938.5" cy="267" r="2.4" fill="#fff" stroke="#777" stroke-width="0.6"/>
  <rect x="937.5" y="269.3" width="2" height="2.5" fill="#fff" stroke="#777" stroke-width="0.5"/>
  <!-- zones -->
  <rect x="935" y="275.3" width="8" height="7" fill="#2a78d0"/>
  <rect x="938.5" y="278" width="4.5" height="4.3" fill="#e03a2a"/>
  <rect x="935.8" y="276.2" width="6" height="1" fill="#9ad0f8"/>
</svg>
<div class="x" style="left:946.5px;top:91.5px;font-weight:bold;color:#222">Views (6)</div>
<div class="x" style="left:953px;top:101.6px;color:#4a3a5a">Floor plan</div>
<div class="x" style="left:959.5px;top:112px;font-weight:bold;color:#222;transform:scaleX(.85)">Floor plan -</div>
<div class="x" style="left:966px;top:122.1px;color:#808080">2. floor</div>
<div class="x" style="left:966px;top:132.3px;color:#808080">1. floor</div>
<div class="x" style="left:966px;top:142.4px;font-weight:bold;color:#1e1e1e;transform:scaleX(.85)">Ground floor</div>
<div class="x" style="left:966px;top:152.6px;color:#808080">Basement</div>
<div class="x" style="left:953px;top:162.8px;color:#1e1e1e">View</div>
<div class="x" style="left:953px;top:173px;color:#1e1e1e">Section</div>
<div class="x" style="left:953px;top:183.3px;color:#1e1e1e">Elevation</div>
<div class="x" style="left:959.5px;top:193.5px;color:#1e1e1e">East elevation</div>
<div class="x" style="left:959.5px;top:203.7px;color:#1e1e1e">North elevation</div>
<div class="x" style="left:959.5px;top:213.8px;color:#1e1e1e">South elevation</div>
<div class="x" style="left:959.5px;top:224px;color:#1e1e1e">West elevation</div>
<div class="x" style="left:953px;top:234px;color:#1e1e1e">Print layout</div>
<div class="x" style="left:953px;top:244.2px;color:#808080">Mood board</div>
<div class="x" style="left:953px;top:254.4px;color:#1e1e1e">Rendering</div>
<div class="x" style="left:946.5px;top:264.7px;font-weight:bold;color:#222;transform:scaleX(.86)">Hidden views</div>
<div class="x" style="left:946.5px;top:275px;color:#1e1e1e">Zones</div>


</body></html>
